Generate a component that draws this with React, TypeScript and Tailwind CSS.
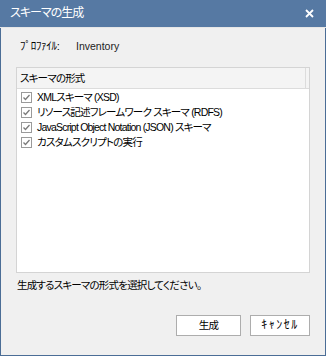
import React from "react";

const items = [
  "XMLスキーマ (XSD)",
  "リソース記述フレームワーク スキーマ (RDFS)",
  "JavaScript Object Notation (JSON) スキーマ",
  "カスタムスクリプトの実行",
];

function CheckBox() {
  return (
    <svg width="11" height="11" viewBox="0 0 11 11" className="shrink-0">
      <rect x="0.5" y="0.5" width="10" height="10" fill="#fff" stroke="#9a9a9a" />
      <path d="M2.5 5.5 L4.5 7.5 L8.5 3" fill="none" stroke="#7a7a7a" strokeWidth="1.3" />
    </svg>
  );
}

export default function App() {
  return (
    <div
      className="w-[326px] h-[356px] flex flex-col border border-t-0 border-[#4b6d96] bg-[#f0f0f0] text-[10.5px] leading-[15px] tracking-[-0.8px] text-black whitespace-nowrap [font-feature-settings:'palt']"
      style={{ fontFamily: '"Liberation Sans", "Noto Sans CJK JP", sans-serif' }}
    >
      {/* Title bar */}
      <div className="h-[28px] bg-[#5679a3] flex items-center justify-between border-b border-[#e6e6e6] -mx-px pl-[10px] pr-[12px]">
        <span className="text-[12px] tracking-[-1px] text-white">スキーマの生成</span>
        <svg width="9" height="9" viewBox="0 0 9 9">
          <path d="M1 1 L8 8 M8 1 L1 8" stroke="#fff" strokeWidth="1.8" />
        </svg>
      </div>

      <div className="flex flex-col px-[15px]">
        <div className="flex items-center h-[16px] mt-[10px] pl-[4px]">
          <span className="w-[56px] shrink-0 text-[11px] tracking-[-0.3px]">ﾌﾟﾛﾌｧｲﾙ:</span>
          <span className="text-[#222] tracking-[0px]">Inventory</span>
        </div>

        {/* List box */}
        <div className="mt-[13px] h-[206px] border border-[#d4d4d4] bg-white flex flex-col">
          <div className="h-[21px] flex border-b border-[#dcdcdc] bg-[#f4f4f4]">
            <div className="flex-1 flex items-center pl-[3px] border-r border-[#dcdcdc]">スキーマの形式</div>
            <div className="w-[3px]" />
          </div>
          <div className="flex flex-col pt-[1px]">
            {items.map((t, i) => (
              <div key={i} className="h-[15px] flex items-center gap-[5px] pl-[4px]">
                <CheckBox />
                <span>{t}</span>
              </div>
            ))}
          </div>
        </div>

        <div className="mt-[4px] h-[16px] flex items-center pl-[1px]">生成するスキーマの形式を選択してください。</div>

        <div className="mt-[22px] flex justify-end gap-[9px]">
          <button className="w-[65px] h-[21px] bg-white border border-[#adadad] flex items-center justify-center">生成</button>
          <button className="w-[60px] h-[21px] bg-white border border-[#adadad] flex items-center justify-center text-[12px] tracking-[1.5px]">ｷｬﾝｾﾙ</button>
        </div>
      </div>
    </div>
  );
}
